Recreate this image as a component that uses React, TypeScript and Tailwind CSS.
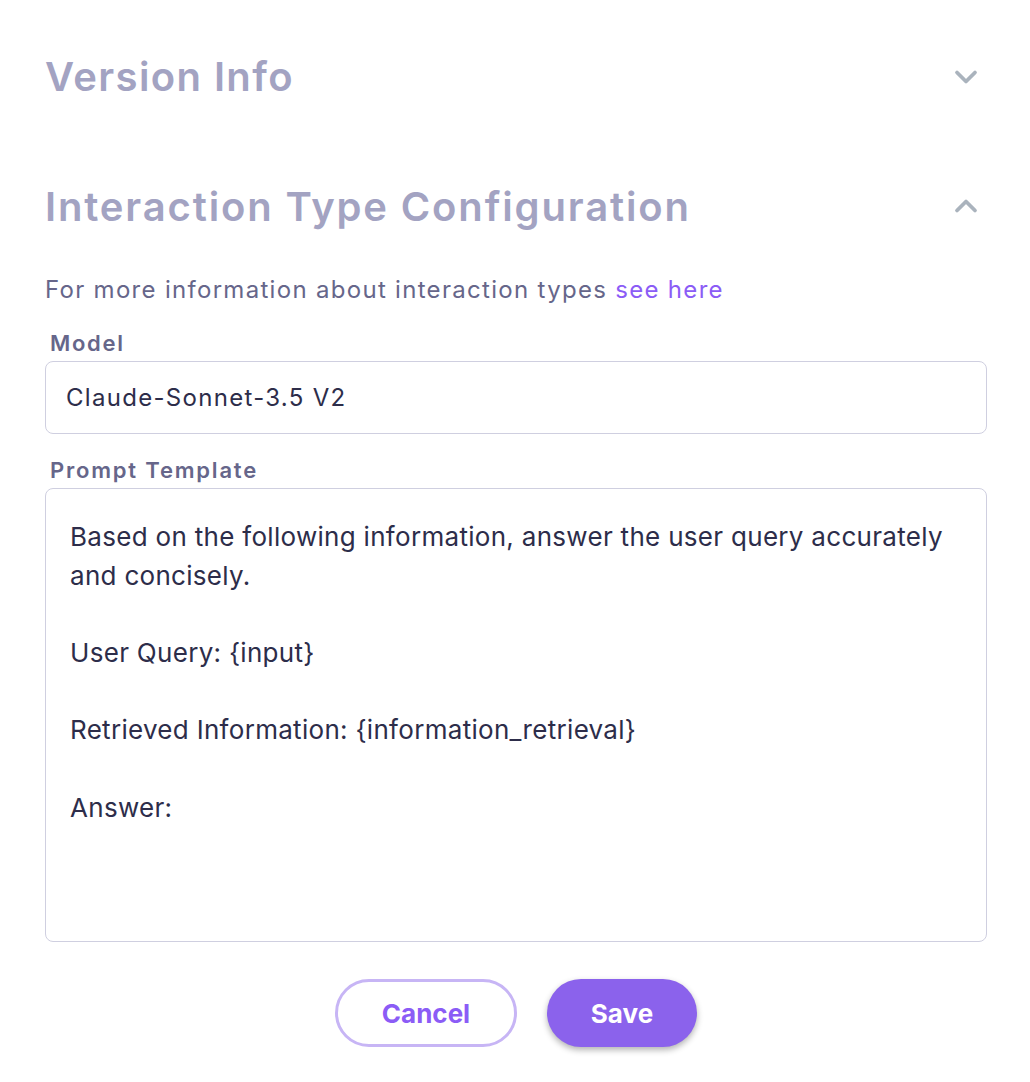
import React from 'react';
import { ChevronDown, ChevronUp } from 'lucide-react';

const promptLines = [
  'Based on the following information, answer the user query accurately',
  'and concisely.',
  '',
  'User Query: {input}',
  '',
  'Retrieved Information: {information_retrieval}',
  '',
  'Answer:',
];

const App: React.FC = () => {
  return (
    <div className="w-[1030px] h-[1082px] bg-white font-['Inter',sans-serif] pl-[45px] pr-[43px] pt-[52px]">
      {/* Version Info */}
      <div className="flex items-center justify-between h-[50px]">
        <h2 className="text-[40px] font-semibold text-[#a3a3c2] tracking-[1.4px] leading-none">Version Info</h2>
        <ChevronDown className="w-[36px] h-[36px] text-[#aab3bd] mr-[3px]" strokeWidth={2.5} />
      </div>

      {/* Interaction Type Configuration */}
      <div className="flex items-center justify-between h-[50px] mt-[80px]">
        <h2 className="text-[40px] font-semibold text-[#a3a3c2] tracking-[1.85px] leading-none">
          Interaction Type Configuration
        </h2>
        <ChevronUp className="w-[36px] h-[36px] text-[#aab3bd] mr-[3px] -mt-[3px]" strokeWidth={2.5} />
      </div>

      <p className="mt-[43px] text-[24px] leading-[30px] tracking-[1.3px] text-[#66668a]">
        For more information about interaction types{' '}
        <a className="text-[#8b5cf6]">see here</a>
      </p>

      <label className="block mt-[24px] ml-[5px] text-[22px] font-semibold leading-[28px] tracking-[1.7px] text-[#66668a]">
        Model
      </label>
      <div className="mt-[4px] h-[73px] border border-[#cfcfe0] rounded-[8px] flex items-center px-[20px] text-[24px] tracking-[1.3px] text-[#2d2d4a]">
        Claude-Sonnet-3.5 V2
      </div>

      <label className="block mt-[22px] ml-[5px] text-[22px] font-semibold leading-[28px] tracking-[1.8px] text-[#66668a]">
        Prompt Template
      </label>
      <div className="mt-[4px] h-[454px] border border-[#cfcfe0] rounded-[8px] pl-[24px] pr-[20px] pt-[29px] text-[26px] leading-[38.7px] tracking-[0.3px] text-[#2d2d4a]">
        {promptLines.map((line, i) => (
          <div key={i} className="h-[38.7px] whitespace-nowrap">{line}</div>
        ))}
      </div>

      <div className="flex justify-center gap-[30px] mt-[37px]">
        <button className="w-[182px] h-[68px] rounded-full border-[3px] border-[#c7b5f5] bg-white text-[26px] font-bold text-[#8b5cf6]">
          Cancel
        </button>
        <button className="w-[150px] h-[68px] rounded-full bg-[#8b62ec] text-[26px] font-bold text-white shadow-[0_3px_6px_rgba(0,0,0,0.3)]">
          Save
        </button>
      </div>
    </div>
  );
};

export default App;
